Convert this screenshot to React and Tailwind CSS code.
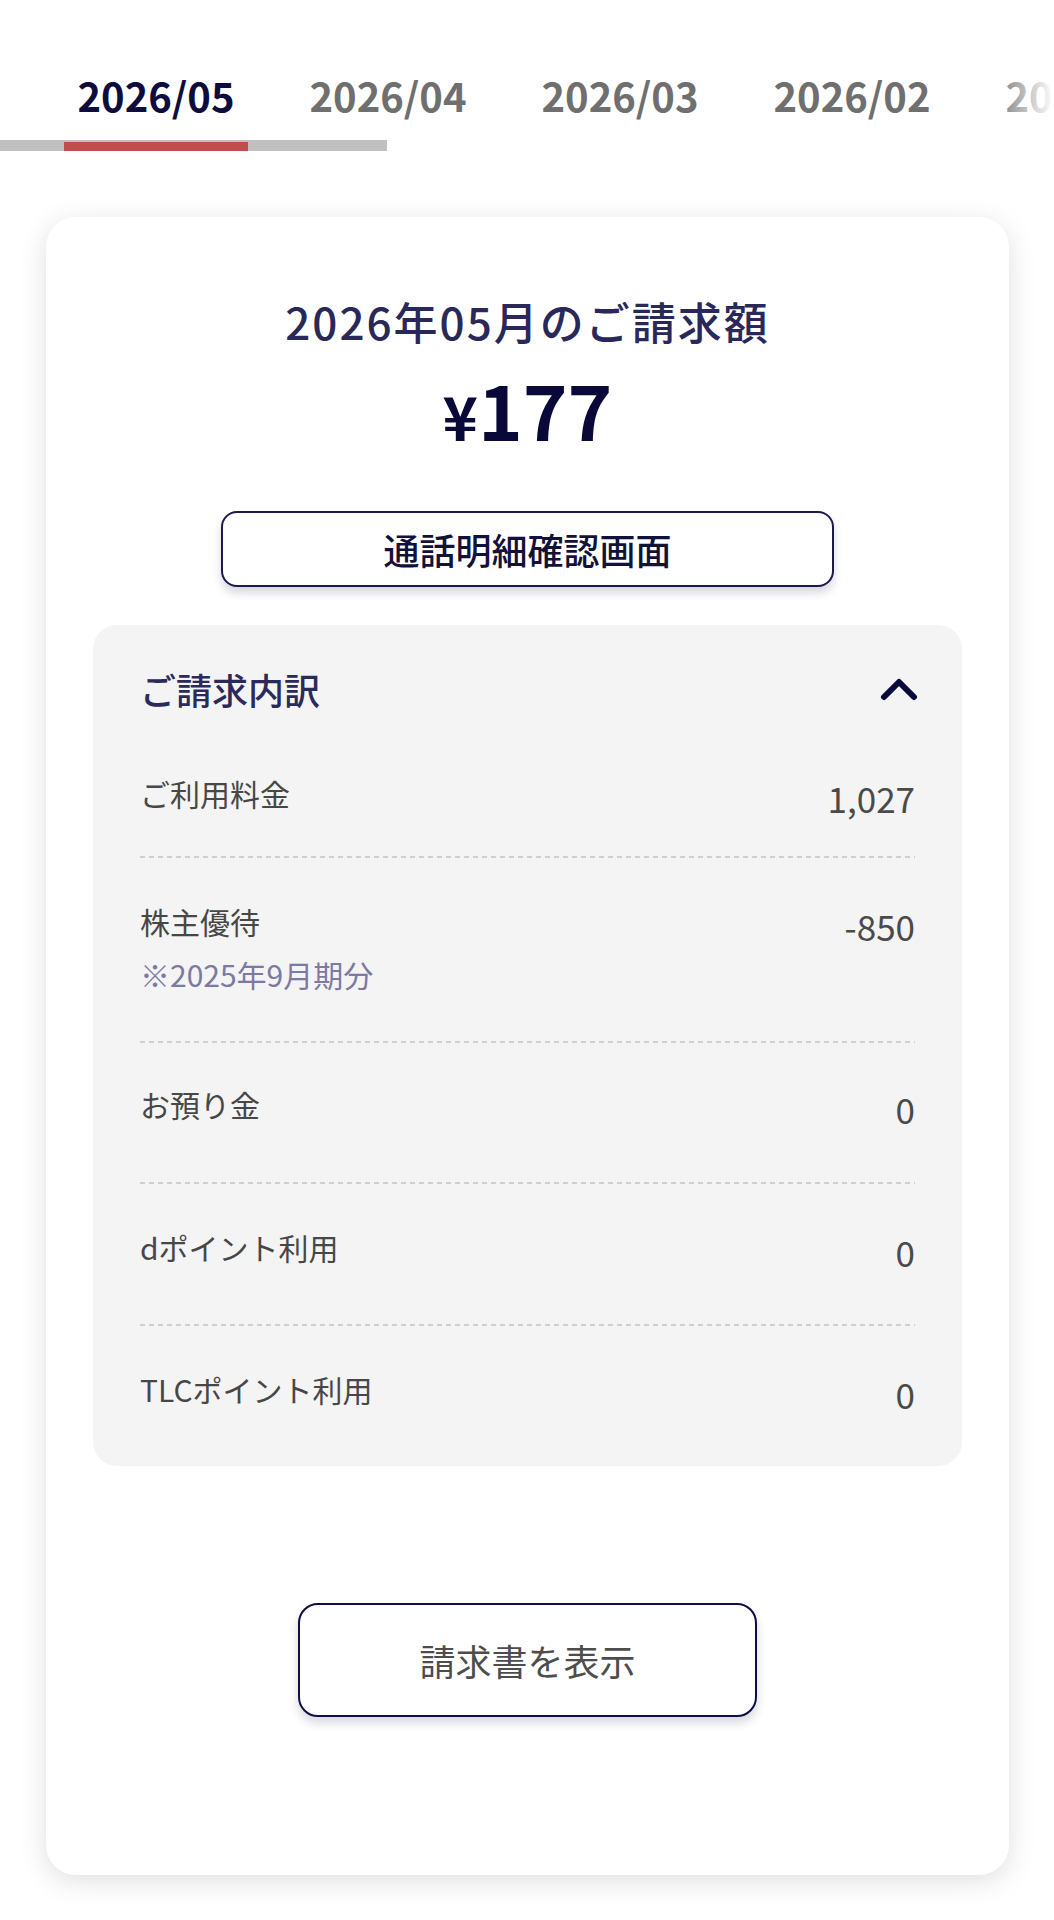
import React from 'react';

const tabs = ['2026/05', '2026/04', '2026/03', '2026/02', '2026/01'];

function Divider() {
  return <div className="h-[2px] w-full bg-[linear-gradient(to_right,#d0d0d0_5px,transparent_5px)] bg-[length:9px_2px]" />;
}

function Row({ label, sub, value, className }) {
  return (
    <div className={className}>
      <div className="flex items-start justify-between">
        <div>
          <div className="text-[30px] leading-[45px] text-[#474747]">{label}</div>
          {sub && <div className="mt-[8px] text-[30px] leading-[45px] text-[#7c79a2]">{sub}</div>}
        </div>
        <div className="mt-[4px] text-[35px] leading-[45px] text-[#4a4a4a]">{value}</div>
      </div>
    </div>
  );
}

export default function App() {
  return (
    <div className="w-[1054px] min-h-[1920px] bg-white pt-[67px] font-['Noto_Sans_CJK_JP','Noto_Sans',sans-serif]">
      {/* month tabs */}
      <div className="relative overflow-hidden">
        <div className="flex pl-[40px]">
          {tabs.map((t, i) => (
            <div
              key={t}
              className={
                i === 0
                  ? 'w-[232px] shrink-0 text-center text-[40px] leading-[56px] font-bold text-[#0d0c3d]'
                  : 'w-[232px] shrink-0 text-center text-[40px] leading-[56px] font-bold text-[#6f6f6f]'
              }
            >
              {t}
            </div>
          ))}
        </div>
        <div className="absolute right-0 top-0 h-[56px] w-[64px] bg-linear-to-l from-white to-white/0" />
        <div className="mt-[17px] flex h-[11px] w-[387px] items-end bg-[#c0c0c0]">
          <div className="ml-[64px] h-[9px] w-[184px] bg-[#c24c4a]" />
        </div>
      </div>

      {/* bill card */}
      <div className="ml-[46px] mt-[66px] w-[963px] rounded-[30px] bg-white pt-[73px] pb-[158px] shadow-[0_6px_28px_rgba(0,0,0,0.13)]">
        <div className="text-center text-[44px] leading-[62px] font-medium tracking-[2px] text-[#2a2859]">2026年05月のご請求額</div>
        <div className="mt-[11px] text-center text-[76px] leading-[90px] font-bold text-[#0a0838]">
          <span className="text-[60px]">¥</span>
          <span>177</span>
        </div>

        <div className="mt-[51px] flex justify-center">
          <button className="h-[76px] w-[613px] rounded-[16px] border-2 border-[#1b1a4a] bg-white text-[36px] font-medium text-[#12113a] shadow-[0_6px_8px_rgba(40,40,90,0.18)]">
            通話明細確認画面
          </button>
        </div>

        <div className="mx-[47px] mt-[38px] rounded-[24px] bg-[#f4f4f4] px-[47px] pt-[39px] pb-[50px]">
          <div className="flex items-center justify-between">
            <div className="text-[36px] leading-[50px] font-medium text-[#2b2a5b]">ご請求内訳</div>
            <svg width="38" height="26" viewBox="0 0 38 26" className="mr-[-3px]">
              <polyline points="4,21 19,6 34,21" fill="none" stroke="#0b0a3c" strokeWidth="6" strokeLinecap="round" strokeLinejoin="round" />
            </svg>
          </div>

          <Row className="pt-[57px] pb-[36px]" label="ご利用料金" value="1,027" />
          <Divider />
          <Row className="pt-[41px] pb-[44px]" label="株主優待" sub="※2025年9月期分" value="-850" />
          <Divider />
          <Row className="pt-[39px] pb-[51px]" label="お預り金" value="0" />
          <Divider />
          <Row className="pt-[41px] pb-[50px]" label="dポイント利用" value="0" />
          <Divider />
          <Row className="pt-[41px]" label="TLCポイント利用" value="0" />
        </div>

        <div className="mt-[137px] flex justify-center">
          <button className="h-[114px] w-[459px] rounded-[20px] border-2 border-[#100e45] bg-white text-[36px] text-[#4d4d4d] shadow-[0_6px_10px_rgba(40,40,90,0.18)]">
            請求書を表示
          </button>
        </div>
      </div>
    </div>
  );
}
